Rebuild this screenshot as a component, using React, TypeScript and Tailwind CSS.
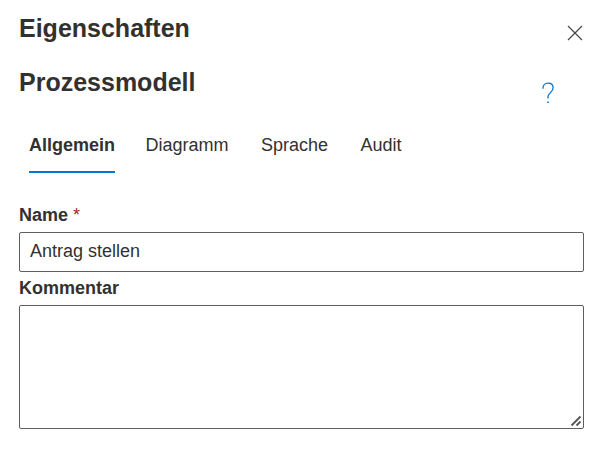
import { useState } from "react";

const tabs = ["Allgemein", "Diagramm", "Sprache", "Audit"];

export default function App() {
  const [active, setActive] = useState("Allgemein");
  const [name, setName] = useState("Antrag stellen");
  const [comment, setComment] = useState("");

  return (
    <main className="min-h-screen bg-white px-[19px] pt-3 pb-5 font-['Liberation_Sans',Arial,sans-serif] text-lg text-[#323130]">
      <header className="flex items-start justify-between">
        <h1 className="text-[25px] leading-8 font-bold">Eigenschaften</h1>
        <button type="button" aria-label="Schließen" className="mt-3 p-px">
          <svg className="size-4" viewBox="0 0 16 16" fill="none" stroke="#484644" strokeWidth="1.2">
            <path d="M1 1l14 14M15 1L1 15" />
          </svg>
        </button>
      </header>

      <div className="mt-[22px] flex items-start justify-between pr-[29px]">
        <h2 className="text-[25px] leading-8 font-bold">Prozessmodell</h2>
        <button type="button" aria-label="Hilfe" className="mt-4">
          <svg className="h-[22px] w-[14px]" viewBox="0 0 14 22" fill="none" stroke="#0078d4" strokeWidth="1.3">
            <path d="M2 6.8V6a5 5 0 0 1 5-4.900c3 0 5.100 1.900 5.100 4.700 0 2-.9 3.200-2.600 4.800C7.800 12.200 7 13.200 7 15v1.600" />
            <path d="M6.200 20.300h1.600" strokeWidth="1.500" />
          </svg>
        </button>
      </div>

      <div role="tablist" className="mt-4 flex gap-7 px-2.5">
        {tabs.map((tab) => (
          <button
            key={tab}
            type="button"
            role="tab"
            aria-selected={active === tab}
            data-label={tab}
            onClick={() => setActive(tab)}
            className={`border-b-2 pt-[9px] pb-2.5 leading-8 before:invisible before:block before:h-0 before:overflow-hidden before:font-bold before:content-[attr(data-label)] ${
              active === tab ? "border-[#0078d4] font-bold" : "border-transparent"
            }`}
          >
            {tab}
          </button>
        ))}
      </div>

      <form className="mt-[26px]" onSubmit={(event) => event.preventDefault()}>
        <label htmlFor="name" className="block pb-px leading-8 font-bold">
          Name <span className="font-normal text-[#a4262c]">*</span>
        </label>
        <input
          id="name"
          type="text"
          required
          value={name}
          onChange={(event) => setName(event.target.value)}
          className="block h-10 w-full rounded-xs border border-[#605e5c] px-2.5 pb-0.5 outline-none"
        />
        <label htmlFor="comment" className="block pb-px leading-8 font-bold">
          Kommentar
        </label>
        <div className="relative">
          <textarea
            id="comment"
            value={comment}
            onChange={(event) => setComment(event.target.value)}
            className="block h-[124px] w-full resize-none rounded-xs border border-[#605e5c] px-2.5 py-2 outline-none"
          />
          <svg
            aria-hidden="true"
            className="pointer-events-none absolute right-0.5 bottom-0.5 size-3"
            viewBox="0 0 12 12"
            fill="none"
            stroke="#555"
            strokeWidth="1.800"
          >
            <path d="M1.500 10.500L10.500 1.500M6.500 10.500L10.500 6.500" />
          </svg>
        </div>
      </form>
    </main>
  );
}
